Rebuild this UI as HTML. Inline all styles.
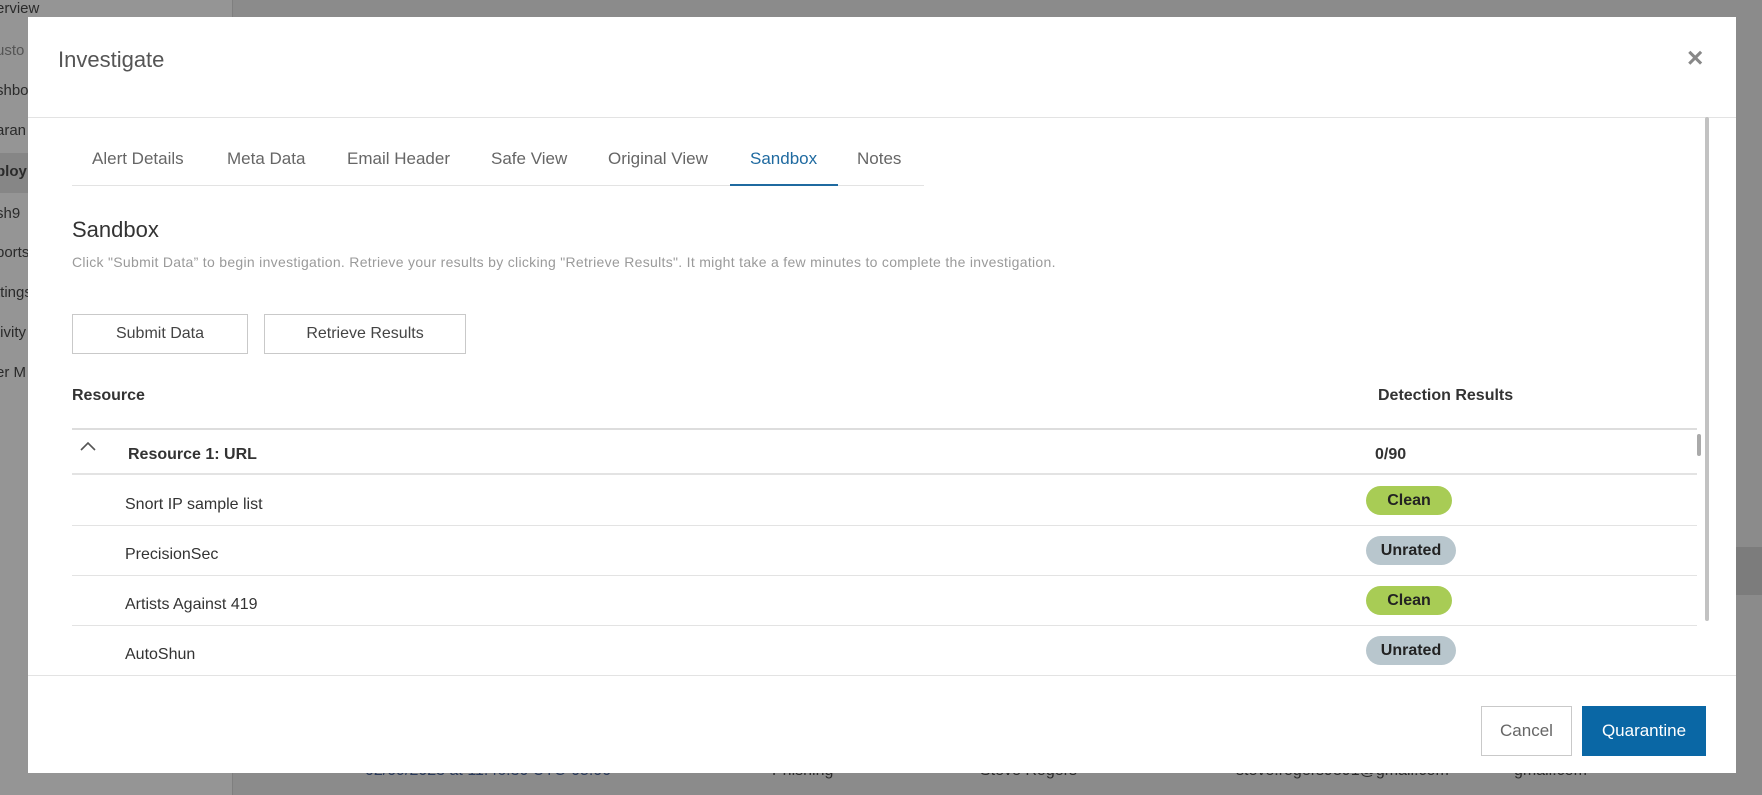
<!DOCTYPE html>
<html><head><meta charset="utf-8"><style>
*{box-sizing:border-box;margin:0;padding:0}
body{width:1762px;height:795px;overflow:hidden;background:#8b8b8b;font-family:"Liberation Sans",sans-serif;position:relative}
.side{position:absolute;left:0;top:0;width:233px;height:795px;background:#959595;border-right:1px solid #7f7f7f}
.side div{position:absolute;left:-4px;font-size:15px;color:#2a2a2a}
.modal{position:absolute;left:28px;top:17px;width:1708px;height:756px;background:#fff}
.abs{position:absolute}
.tab{position:absolute;top:132px;font-size:17px;color:#666}
.line{position:absolute;height:1px;background:#e3e3e3}
.btn{position:absolute;border:1px solid #c9c9c9;background:#fff;font-size:16px;color:#444;display:flex;align-items:center;justify-content:center}
.row{position:absolute;left:97px;font-size:16px;color:#333}
.badge{position:absolute;left:1338px;width:86px;height:29px;border-radius:15px;font-weight:bold;font-size:16px;color:#222;display:flex;align-items:center;justify-content:center}
.clean{background:#a8cc55}.unr{background:#b8c6cd}
.bg{position:absolute;font-size:16px;color:#2a2a2a}
</style></head><body>
<div class="side">
<div style="top:0">erview</div><div style="top:42px;color:#555">usto</div><div style="top:82px">shbo</div><div style="top:122px">aran</div>
<div style="top:153px;left:0;width:233px;height:40px;background:#868686"></div>
<div style="top:163px;font-weight:bold">ploy</div><div style="top:205px">sh9</div><div style="top:244px">ports</div><div style="top:284px">ttings</div><div style="top:324px">tivity</div><div style="top:364px">er M</div>
</div>
<div class="abs" style="left:1736px;top:547px;width:26px;height:48px;background:#7c7c7c"></div>
<div class="bg" style="left:365px;top:762px;color:#2a3a5a">02/09/2023 at 11:46:30 UTC-05:00</div>
<div class="bg" style="left:772px;top:762px">Phishing</div>
<div class="bg" style="left:980px;top:762px">Steve Rogers</div>
<div class="bg" style="left:1236px;top:762px">steve.rogers9891@gmail.com</div>
<div class="bg" style="left:1514px;top:762px">gmail.com</div>
<div class="modal">
<div class="abs" style="left:30px;top:30px;font-size:22px;color:#555">Investigate</div>
<div class="abs" style="left:1659px;top:25px;font-size:28px;color:#888;font-weight:bold">×</div>
<div class="line" style="left:0;top:100px;width:1708px"></div>
<div class="abs" style="left:1677px;top:100px;width:4px;height:504px;background:#c2c2c2;border-radius:2px"></div>
<div class="tab" style="left:64px">Alert Details</div>
<div class="tab" style="left:199px">Meta Data</div>
<div class="tab" style="left:319px">Email Header</div>
<div class="tab" style="left:463px">Safe View</div>
<div class="tab" style="left:580px">Original View</div>
<div class="tab" style="left:722px;color:#1f6aa0">Sandbox</div>
<div class="tab" style="left:829px">Notes</div>
<div class="line" style="left:44px;top:168px;width:852px"></div>
<div class="abs" style="left:702px;top:167px;width:108px;height:2px;background:#1f6aa0"></div>
<div class="abs" style="left:44px;top:200px;font-size:22px;color:#333">Sandbox</div>
<div class="abs" style="left:44px;top:237px;font-size:14px;color:#9a9a9a;letter-spacing:0.3px">Click "Submit Data” to begin investigation. Retrieve your results by clicking "Retrieve Results". It might take a few minutes to complete the investigation.</div>
<div class="btn" style="left:44px;top:297px;width:176px;height:40px">Submit Data</div>
<div class="btn" style="left:236px;top:297px;width:202px;height:40px">Retrieve Results</div>
<div class="abs" style="left:44px;top:370px;font-size:16px;font-weight:bold;color:#333">Resource</div>
<div class="abs" style="left:1350px;top:370px;font-size:16px;font-weight:bold;color:#333">Detection Results</div>
<div class="abs" style="left:44px;top:411px;width:1625px;height:2px;background:#ddd"></div>
<svg class="abs" style="left:51px;top:423px" width="18" height="12"><path d="M2 10 L9 3 L16 10" stroke="#555" stroke-width="1.6" fill="none"/></svg>
<div class="abs" style="left:100px;top:429px;font-size:16px;font-weight:bold;color:#333">Resource 1: URL</div>
<div class="abs" style="left:1347px;top:429px;font-size:16px;font-weight:bold;color:#333">0/90</div>
<div class="abs" style="left:1669px;top:417px;width:4px;height:22px;background:#aaa;border-radius:2px"></div>
<div class="line" style="left:44px;top:456px;width:1625px;height:2px"></div>
<div class="row" style="top:479px">Snort IP sample list</div><div class="badge clean" style="top:469px">Clean</div>
<div class="line" style="left:44px;top:508px;width:1625px"></div>
<div class="row" style="top:529px">PrecisionSec</div><div class="badge unr" style="top:519px;width:90px">Unrated</div>
<div class="line" style="left:44px;top:558px;width:1625px"></div>
<div class="row" style="top:579px">Artists Against 419</div><div class="badge clean" style="top:569px">Clean</div>
<div class="line" style="left:44px;top:608px;width:1625px"></div>
<div class="row" style="top:629px">AutoShun</div><div class="badge unr" style="top:619px;width:90px">Unrated</div>
<div class="line" style="left:0;top:658px;width:1708px"></div>
<div class="btn" style="left:1453px;top:689px;width:91px;height:50px;color:#666;font-size:17px">Cancel</div>
<div class="btn" style="left:1554px;top:689px;width:124px;height:50px;background:#0a67a5;border-color:#0a67a5;color:#fff;font-size:17px">Quarantine</div>
</div>
</body></html>
